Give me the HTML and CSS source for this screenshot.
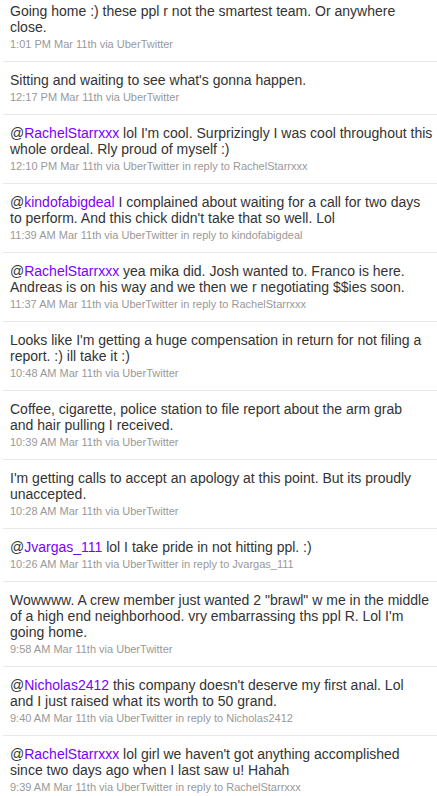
FILE: index.html
```html
<!DOCTYPE html>
<html>
<head>
<meta charset="utf-8">
<link rel="stylesheet" href="styles.css">
</head>
<body>
<ol class="timeline">
  <li class="tweet"><p class="text">Going home :) these ppl r not the smartest team. Or anywhere<br>close.</p><p class="meta">1:01 PM Mar 11th via UberTwitter</p></li>
  <li class="tweet"><p class="text">Sitting and waiting to see what's gonna happen.</p><p class="meta">12:17 PM Mar 11th via UberTwitter</p></li>
  <li class="tweet"><p class="text">@<a>RachelStarrxxx</a> lol I'm cool. Surprizingly I was cool throughout this<br>whole ordeal. Rly proud of myself :)</p><p class="meta">12:10 PM Mar 11th via UberTwitter in reply to RachelStarrxxx</p></li>
  <li class="tweet"><p class="text">@<a>kindofabigdeal</a> I complained about waiting for a call for two days<br>to perform. And this chick didn't take that so well. Lol</p><p class="meta">11:39 AM Mar 11th via UberTwitter in reply to kindofabigdeal</p></li>
  <li class="tweet"><p class="text">@<a>RachelStarrxxx</a> yea mika did. Josh wanted to. Franco is here.<br>Andreas is on his way and we then we r negotiating $$ies soon.</p><p class="meta">11:37 AM Mar 11th via UberTwitter in reply to RachelStarrxxx</p></li>
  <li class="tweet"><p class="text">Looks like I'm getting a huge compensation in return for not filing a<br>report. :) ill take it :)</p><p class="meta">10:48 AM Mar 11th via UberTwitter</p></li>
  <li class="tweet"><p class="text">Coffee, cigarette, police station to file report about the arm grab<br>and hair pulling I received.</p><p class="meta">10:39 AM Mar 11th via UberTwitter</p></li>
  <li class="tweet"><p class="text">I'm getting calls to accept an apology at this point. But its proudly<br>unaccepted.</p><p class="meta">10:28 AM Mar 11th via UberTwitter</p></li>
  <li class="tweet"><p class="text">@<a>Jvargas_111</a> lol I take pride in not hitting ppl. :)</p><p class="meta">10:26 AM Mar 11th via UberTwitter in reply to Jvargas_111</p></li>
  <li class="tweet"><p class="text">Wowwww. A crew member just wanted 2 "brawl" w me in the middle<br>of a high end neighborhood. vry embarrassing ths ppl R. Lol I'm<br>going home.</p><p class="meta">9:58 AM Mar 11th via UberTwitter</p></li>
  <li class="tweet"><p class="text">@<a>Nicholas2412</a> this company doesn't deserve my first anal. Lol<br>and I just raised what its worth to 50 grand.</p><p class="meta">9:40 AM Mar 11th via UberTwitter in reply to Nicholas2412</p></li>
  <li class="tweet"><p class="text">@<a>RachelStarrxxx</a> lol girl we haven't got anything accomplished<br>since two days ago when I last saw u! Hahah</p><p class="meta">9:39 AM Mar 11th via UberTwitter in reply to RachelStarrxxx</p></li>
</ol>
</body>
</html>
```

FILE: styles.css
```css
html, body {
  margin: 0;
  padding: 0;
  background: #fff;
  overflow: hidden;
}
body {
  font-family: "Liberation Sans", Arial, sans-serif;
  color: #333;
}
.timeline {
  list-style: none;
  margin: -7px 0 0 3px;
  padding: 0;
}
.tweet {
  padding: 10px 0 10px 7px;
  border-bottom: 1px solid #eaeaea;
}
.text {
  margin: 0;
  font-size: 14px;
  line-height: 16px;
  white-space: nowrap;
  color: #333;
}
.text a {
  color: #7a00ff;
  text-decoration: none;
}
.meta {
  margin: 2px 0 0;
  font-size: 11px;
  line-height: 14px;
  color: #999;
}
```
